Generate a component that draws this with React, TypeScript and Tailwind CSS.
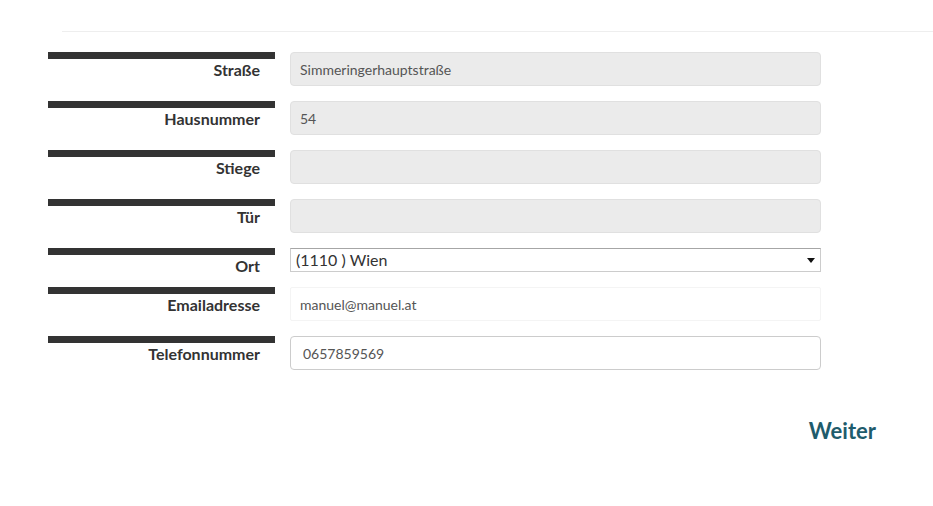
import React from "react";

const font = { fontFamily: "Lato, 'Open Sans', sans-serif" };

function Label({ text }: { text: string }) {
  return (
    <div className="w-[227px] shrink-0 self-start">
      <div className="h-[7px] bg-[#333333]" />
      <div className="mt-[1px] pr-[15px] text-right text-[16px] leading-[20px] font-bold text-[#333333]">
        {text}
      </div>
    </div>
  );
}

function GrayInput({ value }: { value: string }) {
  return (
    <input
      readOnly
      value={value}
      className="ml-[15px] h-[34px] w-[531px] rounded-[4px] border border-[#e0e0e0] bg-[#ebebeb] pl-[9px] text-[14px] text-[#555555] outline-none"
      style={font}
    />
  );
}

export default function App() {
  return (
    <div className="relative h-[506px] w-[933px] overflow-hidden bg-white" style={font}>
      <div className="ml-[62px] mt-[31px] h-px bg-[#eeeeee]" />
      <div className="ml-[48px] mt-[20px] flex flex-col">
        <div className="mb-[15px] flex h-[34px]">
          <Label text="Straße" />
          <GrayInput value="Simmeringerhauptstraße" />
        </div>
        <div className="mb-[15px] flex h-[34px]">
          <Label text="Hausnummer" />
          <GrayInput value="54" />
        </div>
        <div className="mb-[15px] flex h-[34px]">
          <Label text="Stiege" />
          <GrayInput value="" />
        </div>
        <div className="mb-[15px] flex h-[34px]">
          <Label text="Tür" />
          <GrayInput value="" />
        </div>
        <div className="mb-[15px] flex h-[24px]">
          <Label text="Ort" />
          <div className="relative ml-[15px] h-[24px] w-[531px] border border-[#cccccc] border-t-[#a6a6a6] bg-white">
            <div className="pl-[5px] text-[16px] leading-[22px] text-[#333333]">(1110 ) Wien</div>
            <svg className="absolute right-[5px] top-[9px]" width="8" height="5" viewBox="0 0 8 5">
              <path d="M0 0 H8 L4 5 Z" fill="#111" />
            </svg>
          </div>
        </div>
        <div className="mb-[15px] flex h-[34px]">
          <Label text="Emailadresse" />
          <input
            readOnly
            value="manuel@manuel.at"
            className="ml-[15px] h-[34px] w-[531px] rounded-[2px] border border-[#f4f4f4] bg-white pl-[9px] text-[14px] text-[#555555] outline-none"
            style={font}
          />
        </div>
        <div className="flex h-[34px]">
          <Label text="Telefonnummer" />
          <input
            readOnly
            value="0657859569"
            className="ml-[15px] h-[34px] w-[531px] rounded-[4px] border border-[#cccccc] bg-white pl-[12px] text-[14px] text-[#555555] outline-none"
            style={font}
          />
        </div>
      </div>
      <div className="mt-[47px] flex justify-end pr-[57px]">
        <span className="text-[22px] leading-[28px] font-bold text-[#1f5c6c]">Weiter</span>
      </div>
    </div>
  );
}
